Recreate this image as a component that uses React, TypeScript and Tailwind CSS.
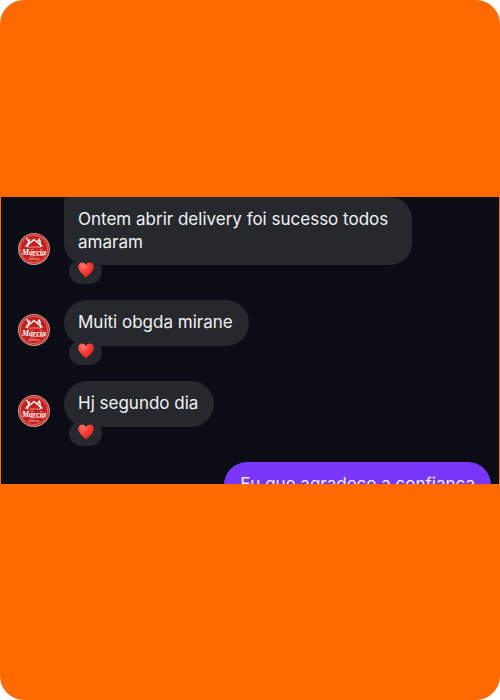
import React from "react";

const MESSAGES = [
  {
    text: "Ontem abrir delivery foi sucesso todos amaram",
    shape: "max-w-[348px] rounded-[22px] rounded-tl-[4px]",
  },
  {
    text: "Muiti obgda mirane",
    shape: "min-h-[46px] rounded-[23px]",
  },
  {
    text: "Hj segundo dia",
    shape: "min-h-[46px] rounded-[23px]",
  },
];

function Avatar() {
  return (
    <svg viewBox="0 0 64 64" className="size-8 shrink-0" role="img" aria-label="Casa da Márcia delivery">
      <circle cx="32" cy="32" r="32" fill="#d39a91" />
      <circle cx="32" cy="32" r="30" fill="#c5201c" />
      <circle cx="32" cy="32" r="27.5" fill="none" stroke="#dd8f87" strokeWidth="1.5" />
      <g fill="none" stroke="#fff" strokeWidth="2.8" strokeLinecap="round" strokeLinejoin="round">
        <path d="M16 26 L24 20 L32 13 L39 19 L48 26" />
        <path d="M18 11l3 6M23 14l-2 7M43 12l-4 5M44 15v7M19 22v5M45 22v5" />
      </g>
      <text x="32" y="29" textAnchor="middle" fill="#f0bdb7" fontSize="7" fontFamily="Liberation Sans, sans-serif">
        Casa da
      </text>
      <text
        x="32"
        y="43"
        textAnchor="middle"
        fill="#fff"
        fontSize="16"
        fontWeight="bold"
        fontStyle="italic"
        fontFamily="Liberation Serif, serif"
      >
        Márcia
      </text>
      <path d="M24 46q12-2 28-1" fill="none" stroke="#f3c9c3" strokeWidth="1.5" />
      <text x="32" y="53" textAnchor="middle" fill="#f6d5d0" fontSize="6" fontFamily="Liberation Sans, sans-serif">
        delivery
      </text>
    </svg>
  );
}

function Heart() {
  return (
    <svg viewBox="0 0 32 32" className="size-4" role="img" aria-label="heart">
      <defs>
        <radialGradient id="heart" cx="0.3" cy="0.2" r="0.9">
          <stop offset="0" stopColor="#ff7566" />
          <stop offset="0.45" stopColor="#fb3f36" />
          <stop offset="1" stopColor="#d91f20" />
        </radialGradient>
      </defs>
      <path
        d="M16 6C14 2.500 11 1 8.200 1 3.800 1 .5 4.600.5 9.500c0 8 9 15 15.500 21.500C22.500 24.500 31.500 17.500 31.500 9.500 31.500 4.600 28.200 1 23.800 1 21 1 18 2.500 16 6Z"
        fill="url(#heart)"
      />
    </svg>
  );
}

function Message({ text, shape }: { text: string; shape: string }) {
  return (
    <li>
      <div className="flex items-end gap-3.5">
        <Avatar />
        <p className={`bg-[#25282d] py-[11px] pl-3.5 pr-4 ${shape}`}>{text}</p>
      </div>
      <div className="-mt-1.5 ml-[51px] flex h-[25px] w-[33px] justify-center rounded-full bg-[#25282d] pt-[3px]">
        <Heart />
      </div>
    </li>
  );
}

export default function App() {
  return (
    <div className="bg-white">
      <main className="flex min-h-screen flex-col justify-center rounded-3xl bg-[#ff6900] px-px pb-[19px]">
        <section className="bg-[#0a0d15] font-['Inter',sans-serif] text-[17px] leading-[23px] text-[#f1f2f3]">
          <ul className="flex flex-col gap-4 px-[17px]">
            {MESSAGES.map((message) => (
              <Message key={message.text} {...message} />
            ))}
          </ul>
          <div className="mt-4 flex h-[22px] justify-end overflow-hidden pr-2">
            <p className="h-[46px] rounded-[23px] bg-[#7a37fa] px-4 py-[11px]">Eu que agradeço a confiança</p>
          </div>
        </section>
      </main>
    </div>
  );
}
